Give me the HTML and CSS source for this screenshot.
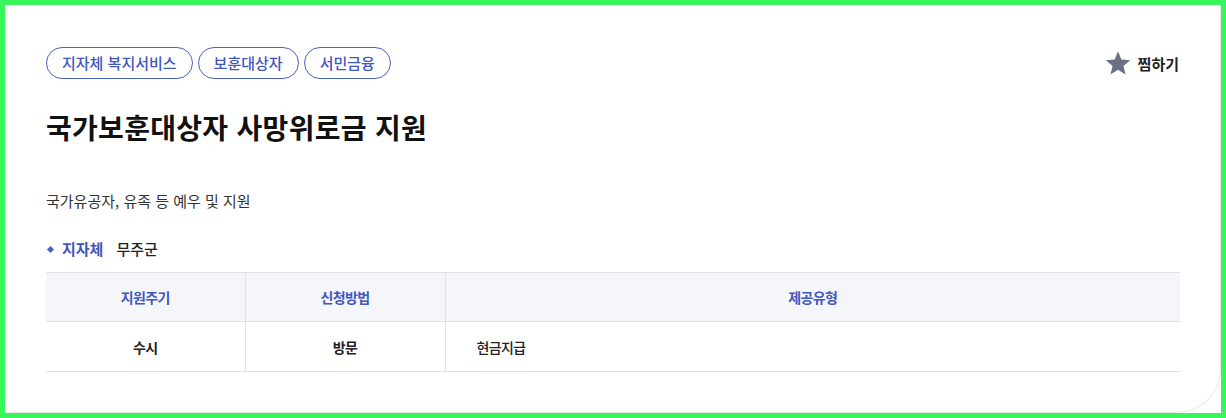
FILE: index.html
```html
<!DOCTYPE html>
<html lang="ko">
<head>
    <meta charset="UTF-8">
    <meta name="viewport" content="width=device-width, initial-scale=1.0">
    <title>국가보훈대상자 사망위로금 지원</title>
    <link rel="stylesheet" href="styles.css">
</head>
<body>

<div class="frame">
    <div class="service-card">
        <div class="card-top">
            <div class="tags">
                <span class="tag">지자체 복지서비스</span>
                <span class="tag">보훈대상자</span>
                <span class="tag">서민금융</span>
            </div>
            <button class="wish-btn">
                <svg class="star" viewBox="0 0 24 24" width="26" height="26">
                    <path d="M12 1.2l3.1 7.6 8.2.6-6.3 5.3 2 8-7-4.4-7 4.4 2-8L.7 9.4l8.2-.6z" fill="#6d6f86"/>
                </svg>
                찜하기
            </button>
        </div>

        <h1 class="service-title">국가보훈대상자 사망위로금 지원</h1>

        <p class="service-desc">국가유공자, 유족 등 예우 및 지원</p>

        <div class="service-meta">
            <span class="meta-label">지자체</span>
            <span class="meta-value">무주군</span>
        </div>

        <table class="info-table">
            <thead>
                <tr>
                    <th class="col-cycle">지원주기</th>
                    <th class="col-method">신청방법</th>
                    <th>제공유형</th>
                </tr>
            </thead>
            <tbody>
                <tr>
                    <td class="center">수시</td>
                    <td class="center">방문</td>
                    <td class="left">현금지급</td>
                </tr>
            </tbody>
        </table>
    </div>
</div>

</body>
</html>
```

FILE: styles.css
```css
* {
    box-sizing: border-box;
}

html, body {
    margin: 0;
    padding: 0;
    background-color: #ffffff;
}

body {
    font-family: "Noto Sans CJK KR", "Noto Sans", sans-serif;
    color: #222222;
}

.frame {
    width: 1226px;
    height: 418px;
    border: 5px solid #36f65b;
    background-color: #fdfdfd;
    overflow: hidden;
}

.service-card {
    height: 100%;
    background-color: white;
    border-right: 1px solid #ebe8e8;
    border-bottom: 1px solid #ebe8e8;
    border-bottom-right-radius: 44px;
    padding: 42px 40px 0 41px;
}

.card-top {
    display: flex;
    justify-content: space-between;
    align-items: center;
}

.tags {
    display: flex;
    gap: 5px;
}

.tag {
    display: inline-block;
    height: 32px;
    line-height: 29px;
    padding: 0 15px;
    border: 1px solid #4a62c4;
    border-radius: 16px;
    color: #3f56bd;
    font-size: 15px;
    font-weight: 500;
}

.wish-btn {
    display: flex;
    align-items: center;
    gap: 7px;
    margin-right: 1px;
    background: none;
    border: none;
    padding: 0;
    font-family: inherit;
    font-size: 15px;
    font-weight: 700;
    color: #222222;
    cursor: pointer;
}

.service-title {
    margin: 28px 0 0;
    font-size: 28px;
    font-weight: 700;
    line-height: 40px;
    letter-spacing: 0.3px;
    color: #111111;
}

.service-desc {
    margin: 43px 0 0;
    font-size: 15px;
    line-height: 22px;
    color: #333333;
}

.service-meta {
    margin-top: 26px;
    display: flex;
    align-items: center;
    font-size: 15px;
    line-height: 22px;
}

.meta-label {
    position: relative;
    padding-left: 16px;
    color: #3f56bd;
    font-weight: 700;
    margin-right: 13px;
}

.meta-label::before {
    content: "";
    position: absolute;
    left: 2px;
    top: 9px;
    width: 5px;
    height: 5px;
    background-color: #4a62c4;
    transform: rotate(45deg);
}

.meta-value {
    font-weight: 500;
    color: #222222;
}

.info-table {
    width: 100%;
    margin-top: 12px;
    border-collapse: collapse;
    table-layout: fixed;
    border-top: 1px solid #e2e2e2;
    font-size: 14px;
    letter-spacing: -0.6px;
}

.info-table th {
    height: 49px;
    background-color: #f4f6fa;
    color: #4258bf;
    font-weight: 700;
    text-align: center;
    border-left: 1px solid #e2e2e2;
    border-bottom: 1px solid #e2e2e2;
}

.info-table td {
    height: 50px;
    font-weight: 700;
    color: #222222;
    border-left: 1px solid #e2e2e2;
    border-bottom: 1px solid #e2e2e2;
}

.info-table th:first-child,
.info-table td:first-child {
    border-left: none;
}

.col-cycle {
    width: 199px;
}

.col-method {
    width: 200px;
}

.info-table td.center {
    text-align: center;
}

.info-table td.left {
    padding-left: 31px;
    font-weight: 500;
}
```
